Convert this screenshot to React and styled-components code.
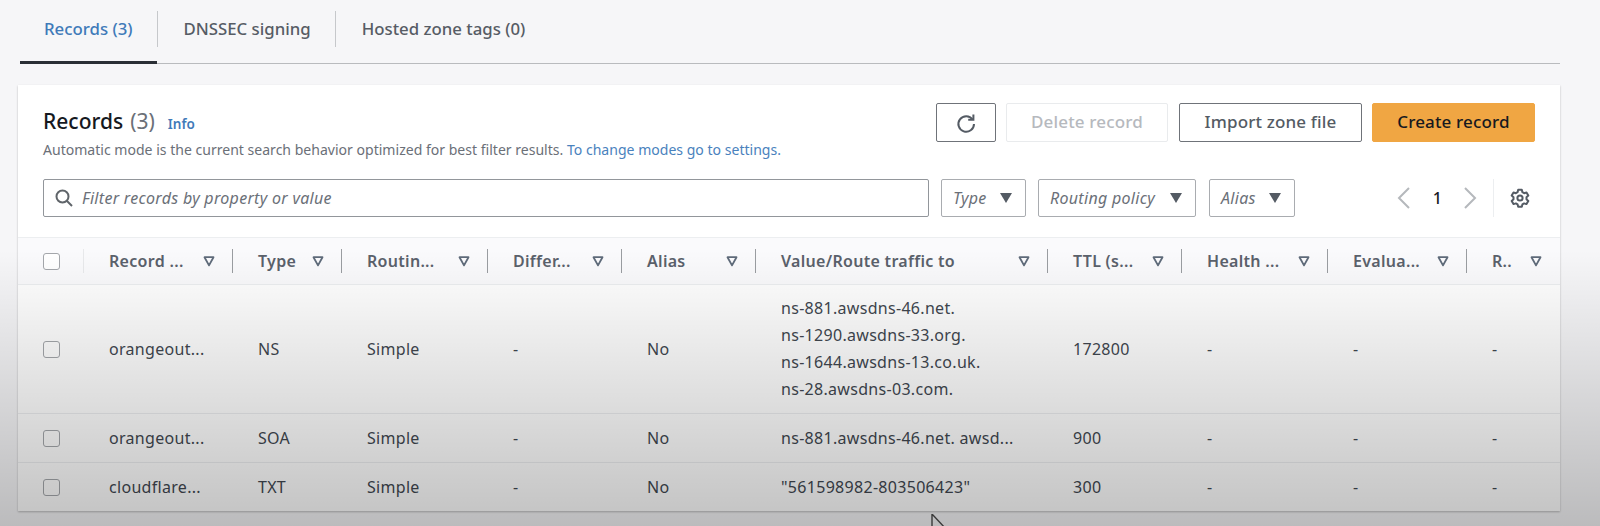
import React from "react";
import styled, { createGlobalStyle } from "styled-components";

const GRID = "66px 149px 109px 146px 134px 134px 292px 134px 146px 139px 93px";

const columns = ["Record ...", "Type", "Routin...", "Differ...", "Alias", "Value/Route traffic to", "TTL (s...", "Health ...", "Evalua...", "R.."];

const records = [
  { name: "orangeout...", type: "NS", values: ["ns-881.awsdns-46.net.", "ns-1290.awsdns-33.org.", "ns-1644.awsdns-13.co.uk.", "ns-28.awsdns-03.com."], ttl: "172800", height: 129 },
  { name: "orangeout...", type: "SOA", values: ["ns-881.awsdns-46.net. awsd..."], ttl: "900", height: 49 },
  { name: "cloudflare...", type: "TXT", values: ['"561598982-803506423"'], ttl: "300", height: 48 },
];

const App = () => {
  return (
    <>
      <GlobalStyle />
      <Page>
        <Tabs>
          <Tab $active>Records (3)</Tab>
          <TabDivider />
          <Tab>DNSSEC signing</Tab>
          <TabDivider />
          <Tab>Hosted zone tags (0)</Tab>
        </Tabs>

        <Card>
          <CardHeader>
            <div>
              <TitleLine>
                <Title>Records</Title>
                <Count>(3)</Count>
                <InfoLink>Info</InfoLink>
              </TitleLine>
              <Description>
                Automatic mode is the current search behavior optimized for best filter results.{" "}
                <DescLink>To change modes go to settings.</DescLink>
              </Description>
            </div>
            <Actions>
              <IconButton aria-label="Refresh">
                <svg width="22" height="22" viewBox="0 0 22 22" fill="none" stroke="#545b64" strokeWidth="2">
                  <path d="M17.6 7.5A7.8 7.8 0 1 0 19 12" />
                  <path d="M18.4 2.6v5.2h-5.2" />
                </svg>
              </IconButton>
              <Button $width={162} $disabled>Delete record</Button>
              <Button $width={183} $left={1}>Import zone file</Button>
              <Button $width={163} $primary>Create record</Button>
            </Actions>
          </CardHeader>

          <FilterRow>
            <Search>
              <svg width="20" height="20" viewBox="0 0 20 20" fill="none" stroke="#5f6469" strokeWidth="2">
                <circle cx="8.5" cy="8.5" r="6" />
                <path d="M13 13l5 5" />
              </svg>
              <SearchText>Filter records by property or value</SearchText>
            </Search>
            <Select $width={85}>Type<Caret /></Select>
            <Select $width={158}>Routing policy<Caret /></Select>
            <Select $width={86} $left={1}>Alias<Caret /></Select>
            <Pager>
              <svg width="16" height="24" viewBox="0 0 16 24" fill="none" stroke="#b5b8bc" strokeWidth="2">
                <path d="M13 2L3 12l10 10" />
              </svg>
              <PageNum>1</PageNum>
              <svg width="16" height="24" viewBox="0 0 16 24" fill="none" stroke="#b5b8bc" strokeWidth="2">
                <path d="M3 2l10 10L3 22" />
              </svg>
              <PagerDivider />
              <svg width="20" height="20" viewBox="0 0 20 20" fill="none" stroke="#545b64" strokeWidth="2">
                <path d="M8.2 1.8h3.6l.6 2.4 1.7 1 2.4-.7 1.8 3.1-1.8 1.7v2l1.8 1.7-1.8 3.1-2.4-.7-1.7 1-.6 2.4H8.2l-.6-2.4-1.7-1-2.4.7-1.8-3.1 1.8-1.7v-2L1.7 7.6l1.8-3.1 2.4.7 1.7-1z" strokeLinejoin="round" />
                <circle cx="10" cy="10" r="2.6" />
              </svg>
            </Pager>
          </FilterRow>

          <HeaderRow>
            <CheckHead>
              <Checkbox />
            </CheckHead>
            {columns.map((col, i) => (
              <HeadCell key={col} $last={i === columns.length - 1}>
                <span>{col}</span>
                <svg width="12" height="11" viewBox="0 0 12 11" fill="none" stroke="#5f6b7a" strokeWidth="1.8">
                  <path d="M1.5 1.2h9L6 9.4z" strokeLinejoin="round" />
                </svg>
              </HeadCell>
            ))}
          </HeaderRow>

          {records.map((rec, i) => (
            <Row key={i} $height={rec.height}>
              <Cell>
                <Checkbox />
              </Cell>
              <Cell>{rec.name}</Cell>
              <Cell>{rec.type}</Cell>
              <Cell>Simple</Cell>
              <Cell>-</Cell>
              <Cell>No</Cell>
              <ValueCell>
                {rec.values.map((v) => (
                  <div key={v}>{v}</div>
                ))}
              </ValueCell>
              <Cell>{rec.ttl}</Cell>
              <Cell>-</Cell>
              <Cell>-</Cell>
              <Cell>-</Cell>
            </Row>
          ))}
        </Card>

        <Shade />
        <Cursor width="22" height="20" viewBox="0 0 22 20" fill="none" stroke="#3a3a3a" strokeWidth="1.4">
          <path d="M1 0v22M1 0l14 15" />
        </Cursor>
      </Page>
    </>
  );
};

const GlobalStyle = createGlobalStyle`
  html, body {
    margin: 0;
    padding: 0;
    background: #f6f6f8;
    overflow: hidden;
  }
  * {
    box-sizing: border-box;
  }
`;

const Page = styled.div`
  position: relative;
  width: 1600px;
  height: 526px;
  padding: 0 40px 0 18px;
  overflow: hidden;
  background: #f6f6f8;
  font-family: "Noto Sans", "Open Sans", sans-serif;
  font-size: 16px;
  letter-spacing: 0.3px;
  color: #414750;
`;

const Tabs = styled.div`
  display: flex;
  height: 64px;
  margin-left: 2px;
  border-bottom: 1px solid #b9bbbe;
`;

const Tab = styled.div`
  height: 64px;
  padding: 11px 25px 0 ${({ $active }) => ($active ? 24 : 26)}px;
  padding-right: 24px;
  line-height: 36px;
  font-size: 16.8px;
  letter-spacing: 0;
  font-weight: 500;
  color: ${({ $active }) => ($active ? "#3f7ab9" : "#565c65")};
  border-bottom: ${({ $active }) => ($active ? "3px solid #2b2f36" : "none")};
`;

const TabDivider = styled.div`
  width: 1px;
  height: 36px;
  margin-top: 11px;
  background: #c6c8cb;
`;

const Card = styled.div`
  margin-top: 21px;
  height: 426px;
  padding-top: 18px;
  background: #ffffff;
  box-shadow: 0 1px 2px rgba(0, 0, 0, 0.25);
`;

const CardHeader = styled.div`
  display: flex;
  justify-content: space-between;
  height: 76px;
  padding: 0 25px 0 25px;
`;

const TitleLine = styled.div`
  display: flex;
  align-items: baseline;
  gap: 7px;
  height: 36px;
  line-height: 36px;
  letter-spacing: 0;
`;

const Title = styled.span`
  font-size: 21px;
  font-weight: 500;
  color: #16191f;
`;

const Count = styled.span`
  font-size: 21px;
  color: #6b7078;
`;

const InfoLink = styled.span`
  margin-left: 6px;
  font-size: 13.5px;
  font-weight: 600;
  color: #3f7ab9;
`;

const Description = styled.div`
  font-size: 14.06px;
  line-height: 21px;
  letter-spacing: 0;
  color: #6b7078;
`;

const DescLink = styled.span`
  color: #4a82bd;
`;

const Actions = styled.div`
  display: flex;
  gap: 10px;
  height: 39px;
`;

const Button = styled.button`
  width: ${({ $width }) => $width}px;
  height: 39px;
  margin-left: ${({ $left }) => $left || 0}px;
  padding: 0 0 2px;
  border-radius: 2px;
  font-family: inherit;
  font-size: 17px;
  letter-spacing: 0.15px;
  font-weight: 500;
  background: ${({ $primary }) => ($primary ? "#f0a643" : "#ffffff")};
  color: ${({ $primary, $disabled }) => ($primary ? "#16191f" : $disabled ? "#b6b9be" : "#545b64")};
  border: 1px solid ${({ $primary, $disabled }) => ($primary ? "#f0a643" : $disabled ? "#e9ebed" : "#6f7379")};
`;

const IconButton = styled(Button)`
  display: flex;
  align-items: center;
  justify-content: center;
  width: 60px;
  padding: 0;
`;

const FilterRow = styled.div`
  display: flex;
  align-items: center;
  height: 38px;
  padding-left: 25px;
  margin-bottom: 20px;
`;

const Search = styled.div`
  display: flex;
  align-items: center;
  gap: 8px;
  width: 886px;
  height: 38px;
  padding-left: 10px;
  border: 1px solid #92969b;
  border-radius: 2px;
`;

const SearchText = styled.span`
  font-style: italic;
  color: #6b7078;
`;

const Select = styled.div`
  display: flex;
  align-items: center;
  justify-content: space-between;
  width: ${({ $width }) => $width}px;
  height: 38px;
  margin-left: ${({ $left }) => 12 + ($left || 0)}px;
  padding: 0 13px 0 11px;
  border: 1px solid #a9acb0;
  border-radius: 2px;
  font-style: italic;
  color: #6b7078;
`;

const Caret = styled.i`
  width: 0;
  height: 0;
  border-left: 6.5px solid transparent;
  border-right: 6.5px solid transparent;
  border-top: 10px solid #545b64;
`;

const Pager = styled.div`
  display: flex;
  align-items: center;
  margin-left: 101px;
`;

const PageNum = styled.span`
  width: 50px;
  padding-left: 1px;
  text-align: center;
  font-weight: 500;
  color: #16191f;
`;

const PagerDivider = styled.div`
  width: 1px;
  height: 38px;
  margin: 0 16px 0 15px;
  background: #eceef0;
`;

const HeaderRow = styled.div`
  display: grid;
  grid-template-columns: ${GRID};
  align-items: center;
  height: 48px;
  background: #fafafc;
  border-top: 1px solid #eceef0;
  border-bottom: 1px solid #eceef0;
`;

const CheckHead = styled.div`
  display: flex;
  align-items: center;
  height: 24px;
  padding-left: 25px;
  border-right: 1px solid #e8e9eb;
`;

const HeadCell = styled.div`
  display: flex;
  align-items: center;
  justify-content: space-between;
  height: 24px;
  padding: 0 ${({ $last }) => ($last ? 18 : 17)}px 0 25px;
  border-right: ${({ $last }) => ($last ? "none" : "1px solid #9a9da1")};
  font-weight: 600;
  color: #5a616b;
  white-space: nowrap;
`;

const Checkbox = styled.div`
  width: 17px;
  height: 17px;
  background: #ffffff;
  border: 1px solid #a4a7ab;
  border-radius: 3px;
`;

const Row = styled.div`
  display: grid;
  grid-template-columns: ${GRID};
  align-items: center;
  height: ${({ $height }) => $height}px;
  border-bottom: 1px solid #eceef0;
  &:last-child {
    border-bottom: none;
  }
`;

const Cell = styled.div`
  padding-left: 25px;
  white-space: nowrap;
`;

const ValueCell = styled(Cell)`
  line-height: 27px;
`;

const Shade = styled.div`
  position: absolute;
  left: 0;
  right: 0;
  top: 250px;
  bottom: 0;
  pointer-events: none;
  background: linear-gradient(to bottom, rgba(0, 0, 0, 0), rgba(0, 0, 0, 0.24));
`;

const Cursor = styled.svg`
  position: absolute;
  left: 931px;
  top: 514px;
`;

export default App;
